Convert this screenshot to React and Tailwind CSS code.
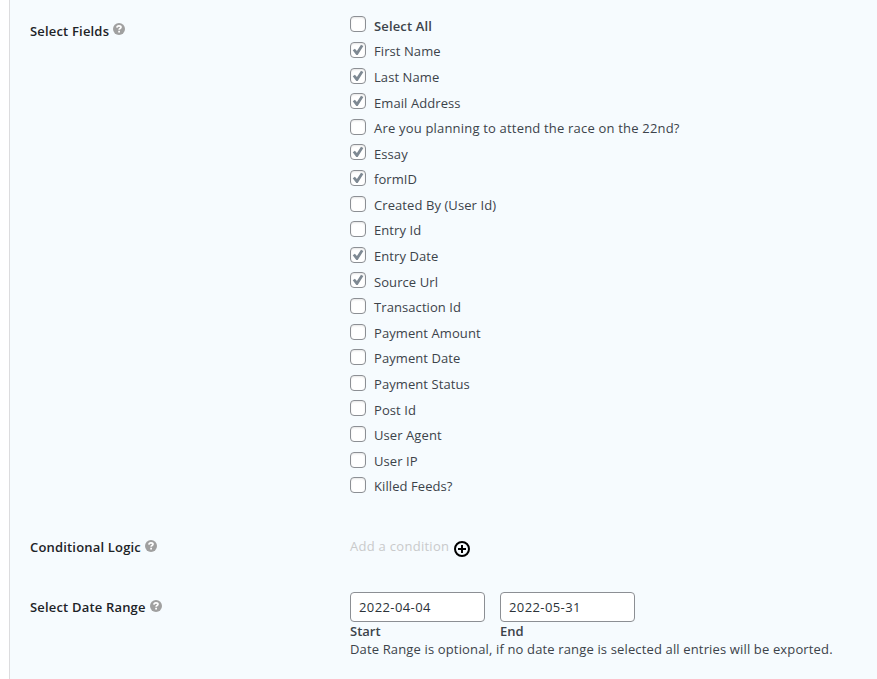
const fields = [
  ['Select All', false],
  ['First Name', true],
  ['Last Name', true],
  ['Email Address', true],
  ['Are you planning to attend the race on the 22nd?', false],
  ['Essay', true],
  ['formID', true],
  ['Created By (User Id)', false],
  ['Entry Id', false],
  ['Entry Date', true],
  ['Source Url', true],
  ['Transaction Id', false],
  ['Payment Amount', false],
  ['Payment Date', false],
  ['Payment Status', false],
  ['Post Id', false],
  ['User Agent', false],
  ['User IP', false],
  ['Killed Feeds?', false],
];

function HelpIcon() {
  return (
    <svg className="mb-[3px] ml-1 h-3 w-3 shrink-0" viewBox="0 0 12 12" aria-hidden="true">
      <circle cx="6" cy="6" r="6" fill="#a0a0a0" />
      <path d="M3.900 4.600C4 3.300 4.900 2.800 6 2.800c1.200 0 2 .6 2 1.500 0 1.200-1.900 1.200-1.900 2.500" fill="none" stroke="#fff" strokeWidth="1.700" />
      <path d="M5.200 7.700h1.800v1.700H5.200z" fill="#fff" />
    </svg>
  );
}

function Label({ children }) {
  return (
    <div className="flex h-5 w-[320px] shrink-0 items-center text-[13px] font-semibold tracking-[0.18px] text-[#1d2327]">
      <span className="pt-px">{children}</span>
      <HelpIcon />
    </div>
  );
}

function Checkbox({ checked }) {
  return (
    <span className="flex h-4 w-4 shrink-0 items-center justify-center rounded border border-[#8c8f94] bg-white shadow-[inset_0_1px_2px_rgba(0,0,0,0.1)]">
      {checked && (
        <svg className="h-3 w-3" viewBox="0 0 12 12" aria-hidden="true">
          <path d="M.7 6.200 2.900 4.800 4.900 7.100 9 .8 11.400 2.100 5.700 11H4.300Z" fill="#7e8993" />
        </svg>
      )}
    </span>
  );
}

function DateField({ value, caption }) {
  return (
    <div className="w-[135px]">
      <div className="flex h-[30px] items-center rounded border border-[#8c8f94] bg-white px-2 pt-px text-[13px] tracking-[0.4px] text-[#2c3338]">
        {value}
      </div>
      <div className="h-[18px] text-[13px] leading-[18px] font-semibold">{caption}</div>
    </div>
  );
}

export default function App() {
  return (
    <div className="h-[679px] w-[877px] overflow-hidden bg-white pl-[9px] font-['Open_Sans','Noto_Sans',sans-serif] text-[13px] whitespace-nowrap text-[#3c434a]">
      <main className="h-full border-l border-[#dcdcde] bg-[#f6fbfe] pl-5">
        <section className="flex h-[537px] pt-[11.7px]">
          <div className="pt-[9.3px]">
            <Label>Select Fields</Label>
          </div>
          <ul>
            {fields.map(([name, checked], i) => (
              <li key={name} className="flex h-[25.6px] items-center">
                <Checkbox checked={checked} />
                <span
                  className={
                    i === 0
                      ? 'ml-2 pt-1 font-semibold tracking-[0.15px]'
                      : name.length > 30
                        ? 'ml-2 pt-1 tracking-[0.19px]'
                        : 'ml-2 pt-1 tracking-[0.08px]'
                  }
                >
                  {name}
                </span>
              </li>
            ))}
          </ul>
        </section>
        <section className="flex h-[55px]">
          <Label>Conditional Logic</Label>
          <div className="flex h-5 items-center text-[#c9cacb]">
            <span className="tracking-[0.28px]">Add a condition</span>
            <svg className="mt-[3px] ml-[5px] h-4 w-4" viewBox="0 0 16 16" fill="none" stroke="#000" strokeWidth="2" aria-hidden="true">
              <circle cx="8" cy="8" r="7" />
              <path d="M8 4v8M4 8h8" />
            </svg>
          </div>
        </section>
        <section className="flex">
          <div className="pt-[5px]">
            <Label>Select Date Range</Label>
          </div>
          <div>
            <div className="flex gap-[15px]">
              <DateField value="2022-04-04" caption="Start" />
              <DateField value="2022-05-31" caption="End" />
            </div>
            <p className="leading-[18px] tracking-[0.145px]">Date Range is optional, if no date range is selected all entries will be exported.</p>
          </div>
        </section>
      </main>
    </div>
  );
}
